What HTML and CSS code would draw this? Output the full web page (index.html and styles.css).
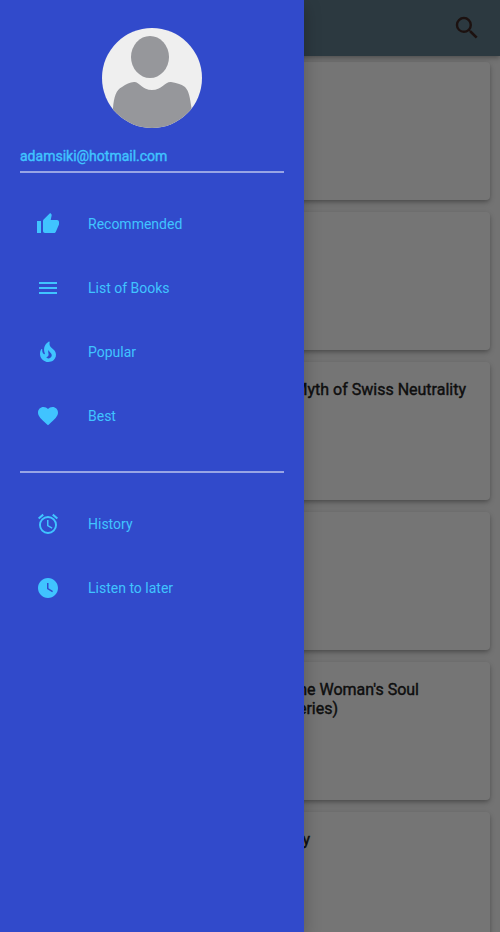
FILE: index.html
```html
<!DOCTYPE html>
<html lang="en">
<head>
<meta charset="utf-8">
<title>Books</title>
<link rel="stylesheet" href="styles.css">
</head>
<body>
<div class="page">
  <header class="app-bar">
    <svg class="search" viewBox="0 0 24 24"><path d="M15.5 14h-.79l-.28-.27A6.471 6.471 0 0 0 16 9.5 6.5 6.5 0 1 0 9.5 16c1.61 0 3.09-.59 4.23-1.57l.27.28v.79l5 4.99L20.49 19l-4.99-5zm-6 0C7.01 14 5 11.99 5 9.5S7.01 5 9.5 5 14 7.01 14 9.5 11.99 14 9.5 14z"/></svg>
  </header>
  <main class="cards">
    <article class="card"></article>
    <article class="card"></article>
    <article class="card"><h2 class="title"><span class="line myth">Myth of Swiss Neutrality</span></h2></article>
    <article class="card"></article>
    <article class="card"><h2 class="title"><span class="line soul">the Woman's Soul</span><span class="line series">Series)</span></h2></article>
    <article class="card"><h2 class="title"><span class="line last">y</span></h2></article>
  </main>
</div>
<div class="scrim"></div>
<aside class="drawer">
  <svg class="avatar" viewBox="0 0 100 100">
    <defs><clipPath id="circle"><circle cx="50" cy="50" r="50"/></clipPath></defs>
    <g clip-path="url(#circle)">
      <rect width="100" height="100" fill="#efefef"/>
      <ellipse cx="48" cy="29" rx="19" ry="21" fill="#96979b"/>
      <path d="M11 80C12 69 14 62 20 59C24 56 28 54.500 32 54C37 53.500 40 62 50 62C60 62 63 53.500 69 54C74 55 79 56 83 59C87 63 88 70 89.500 80V100H11Z" fill="#96979b"/>
    </g>
  </svg>
  <div class="email">adamsiki@hotmail.com</div>
  <hr class="divider">
  <nav class="menu main-menu">
    <a class="item"><svg class="icon" viewBox="0 0 24 24"><path d="M1 21h4V9H1v12zm22-11c0-1.100-.9-2-2-2h-6.310l.95-4.570.03-.32c0-.41-.17-.79-.44-1.060L14.170 1 7.590 7.590C7.220 7.950 7 8.450 7 9v10c0 1.100.9 2 2 2h9c.83 0 1.540-.5 1.840-1.220l3.020-7.050c.09-.23.14-.47.14-.73v-2z"/></svg>Recommended</a>
    <a class="item"><svg class="icon" viewBox="0 0 24 24"><path d="M3 18h18v-2H3v2zm0-5h18v-2H3v2zm0-7v2h18V6H3z"/></svg>List of Books</a>
    <a class="item"><svg class="icon" viewBox="0 0 24 24"><path d="M19.480 12.350c-1.570-4.080-7.160-4.300-5.810-10.230.1-.44-.37-.78-.75-.55C9.290 3.710 6.680 8 8.870 13.620c.18.46-.36.89-.75.59-1.810-1.370-2-3.340-1.840-4.750.06-.52-.62-.77-.91-.34C4.690 10.160 4 11.840 4 14.370c.38 5.600 5.110 7.320 6.810 7.540 2.430.31 5.060-.14 6.950-1.870 2.080-1.930 2.840-5.010 1.720-7.690zm-9.280 5.030c1.440-.35 2.180-1.390 2.380-2.310.33-1.430-.96-2.830-.09-5.090.33 1.870 3.270 3.040 3.270 5.080.08 2.530-2.660 4.700-5.560 2.320z"/></svg>Popular</a>
    <a class="item"><svg class="icon" viewBox="0 0 24 24"><path d="M12 21.350l-1.450-1.320C5.400 15.360 2 12.280 2 8.500 2 5.420 4.420 3 7.500 3c1.740 0 3.410.81 4.500 2.090C13.090 3.810 14.760 3 16.500 3 19.580 3 22 5.420 22 8.500c0 3.780-3.400 6.860-8.550 11.540L12 21.350z"/></svg>Best</a>
  </nav>
  <hr class="divider">
  <nav class="menu">
    <a class="item"><svg class="icon" viewBox="0 0 24 24"><path d="M22 5.720l-4.600-3.860-1.290 1.530 4.600 3.860L22 5.720zM7.880 3.390L6.600 1.860 2 5.710l1.290 1.530 4.590-3.850zM12.500 8H11v6l4.750 2.850.75-1.230-4-2.370V8zM12 4a9 9 0 1 0 0 18 9 9 0 0 0 0-18zm0 16c-3.870 0-7-3.130-7-7s3.130-7 7-7 7 3.130 7 7-3.130 7-7 7z"/></svg>History</a>
    <a class="item"><svg class="icon" viewBox="0 0 24 24"><path d="M12 2C6.500 2 2 6.500 2 12s4.500 10 10 10 10-4.500 10-10S17.500 2 12 2zm4.200 14.200L11 13V7h1.500v5.200l4.500 2.700-.8 1.300z"/></svg>Listen to later</a>
  </nav>
</aside>
</body>
</html>
```

FILE: styles.css
```css
* { box-sizing: border-box; }
body {
  margin: 0;
  height: 932px;
  overflow: hidden;
  position: relative;
  font-family: Roboto, "Liberation Sans", sans-serif;
  background: #fafafa;
}
.page { height: 932px; overflow: hidden; }
.app-bar {
  position: relative;
  height: 56px;
  display: flex;
  align-items: center;
  justify-content: flex-end;
  padding: 0 18px 1px 0;
  background: #607d8b;
  box-shadow: 0 2px 4px -1px rgba(0,0,0,.2), 0 3px 5px rgba(0,0,0,.12), 0 1px 8px rgba(0,0,0,.06);
}
.search { width: 30px; height: 30px; fill: #3e2723; }
.cards {
  display: flex;
  flex-direction: column;
  gap: 12px;
  padding: 6px 10px 0;
}
.card {
  flex: none;
  height: 138px;
  padding-top: 18px;
  border-radius: 4px;
  background: #fff;
  box-shadow: 0 2px 4px -1px rgba(0,0,0,.28), 0 3px 6px rgba(0,0,0,.12), 0 1px 8px rgba(0,0,0,.05);
}
.title {
  margin: 0;
  font-size: 16px;
  font-weight: 400;
  line-height: 19px;
  text-align: right;
  color: #212121;
  -webkit-text-stroke: .4px #212121;
}
.line { display: block; }
.myth { margin-right: 24px; }
.soul { margin-right: 71px; }
.series { margin-right: 152px; }
.last { margin-right: 180px; }
.scrim { position: absolute; inset: 0; background: rgba(0,0,0,.54); }
.drawer {
  position: absolute;
  inset: 0 auto 0 0;
  width: 304px;
  padding: 28px 20px 0;
  background: #314acb;
  color: #40c4ff;
  box-shadow: 0 6px 16px rgba(0,0,0,.25);
}
.avatar { display: block; width: 100px; height: 100px; margin: 0 auto; }
.email {
  margin-top: 20px;
  font-size: 14px;
  line-height: 16px;
  -webkit-text-stroke: .4px #40c4ff;
}
.divider {
  height: 2px;
  margin: 7px 0 0;
  border: 0;
  background: rgba(255,255,255,.5);
}
.menu { display: flex; flex-direction: column; padding-top: 19px; }
.main-menu { padding-bottom: 16px; }
.item {
  display: flex;
  align-items: center;
  gap: 28px;
  height: 64px;
  padding-left: 16px;
  font-size: 14px;
}
.icon { width: 24px; height: 24px; fill: #40c4ff; }
```
